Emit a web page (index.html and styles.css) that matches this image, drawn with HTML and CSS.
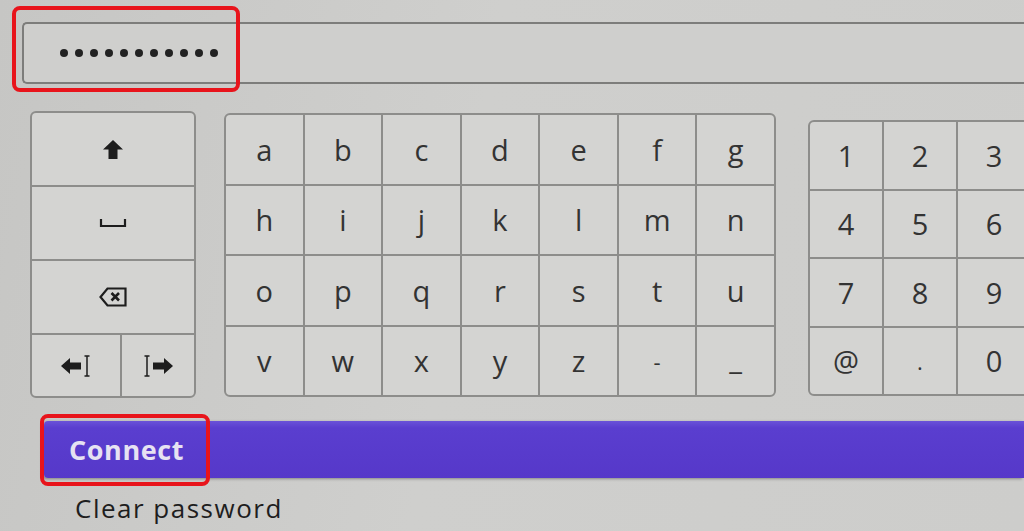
FILE: index.html
```html
<!DOCTYPE html>
<html lang="en">
<head>
<meta charset="UTF-8" />
<meta name="viewport" content="width=device-width, initial-scale=1" />
<title>Enter password</title>
<link rel="stylesheet" href="styles.css">
</head>
<body>
  <div class="screen">
    <div class="field">
      <span class="dot"></span><span class="dot"></span><span class="dot"></span><span class="dot"></span>
      <span class="dot"></span><span class="dot"></span><span class="dot"></span><span class="dot"></span>
      <span class="dot"></span><span class="dot"></span><span class="dot"></span>
    </div>

    <div class="keyboard">
      <div class="pad tools">
        <div class="key wide">
          <svg width="22" height="21" viewBox="0 0 22 21"><path d="M11 1 L21 10.5 L15.5 10.5 L15.5 20 L6.5 20 L6.5 10.5 L1 10.5 Z" fill="#1d1d1d"/></svg>
        </div>
        <div class="key wide">
          <svg width="28" height="10" viewBox="0 0 28 10"><path d="M2 1 V8 H26 V1" fill="none" stroke="#1d1d1d" stroke-width="2.2"/></svg>
        </div>
        <div class="key wide">
          <svg width="28" height="20" viewBox="0 0 28 20"><path d="M8.5 1.5 H26.5 V18.5 H8.5 L1.5 10 Z" fill="none" stroke="#1d1d1d" stroke-width="2.2"/><path d="M12.5 6 L20 13.5 M20 6 L12.5 13.5" stroke="#1d1d1d" stroke-width="2.6"/></svg>
        </div>
        <div class="key">
          <svg width="32" height="24" viewBox="0 0 32 24"><path d="M1 12 L10 4 L10 8.5 L21 8.5 L21 15.5 L10 15.5 L10 20 Z" fill="#1d1d1d"/><path d="M27 2 V22 M24.5 2 H29.5 M24.5 22 H29.5" stroke="#1d1d1d" stroke-width="1.5" fill="none"/></svg>
        </div>
        <div class="key">
          <svg width="32" height="24" viewBox="0 0 32 24"><path d="M31 12 L22 4 L22 8.5 L11 8.5 L11 15.5 L22 15.5 L22 20 Z" fill="#1d1d1d"/><path d="M5 2 V22 M2.5 2 H7.5 M2.5 22 H7.5" stroke="#1d1d1d" stroke-width="1.5" fill="none"/></svg>
        </div>
      </div>

      <div class="pad letters">
        <div class="key">a</div><div class="key">b</div><div class="key">c</div><div class="key">d</div><div class="key">e</div><div class="key">f</div><div class="key">g</div>
        <div class="key">h</div><div class="key">i</div><div class="key">j</div><div class="key">k</div><div class="key">l</div><div class="key">m</div><div class="key">n</div>
        <div class="key">o</div><div class="key">p</div><div class="key">q</div><div class="key">r</div><div class="key">s</div><div class="key">t</div><div class="key">u</div>
        <div class="key">v</div><div class="key">w</div><div class="key">x</div><div class="key">y</div><div class="key">z</div><div class="key small">-</div><div class="key low">_</div>
      </div>

      <div class="pad numbers">
        <div class="key">1</div><div class="key">2</div><div class="key">3</div>
        <div class="key">4</div><div class="key">5</div><div class="key">6</div>
        <div class="key">7</div><div class="key">8</div><div class="key">9</div>
        <div class="key">@</div><div class="key small">.</div><div class="key">0</div>
      </div>
    </div>

    <div class="connect">Connect</div>
    <div class="clear">Clear password</div>

    <div class="highlight hl-field"></div>
    <div class="highlight hl-connect"></div>
  </div>
</body>
</html>
```

FILE: styles.css
```css
body {
  margin: 0;
  width: 1024px;
  height: 531px;
  overflow: hidden;
  background: #cbcbc9;
  font-family: "Open Sans", Lato, sans-serif;
  color: #2e2e2e;
}

.screen {
  position: relative;
  width: 1024px;
  height: 531px;
  overflow: hidden;
  background: linear-gradient(100deg, #c6c6c4 0%, #cfcfcd 45%, #cdcdcb 100%);
}

/* Password field, runs off the right edge */
.field {
  margin: 22px 0 0 22px;
  height: 58px;
  border: 2px solid #7d7d7b;
  border-right: none;
  border-radius: 5px 0 0 5px;
  display: flex;
  align-items: center;
  gap: 7px;
  padding-left: 36px;
  background: #cfcfcd;
}

.dot {
  width: 8px;
  height: 8px;
  border-radius: 50%;
  background: #222;
}

.keyboard {
  display: flex;
  align-items: flex-start;
  margin-top: 27px;
}

.pad {
  display: grid;
  flex-shrink: 0;
  gap: 2px;
  background: #8d8d8b;
  border: 2px solid #8d8d8b;
  border-radius: 6px;
  overflow: hidden;
}

.key {
  background: #d4d4d2;
  display: flex;
  align-items: center;
  justify-content: center;
  font-size: 29px;
  line-height: 1;
  color: #333;
}

.tools {
  margin-left: 30px;
  width: 162px;
  height: 283px;
  grid-template-columns: 88px 1fr;
  grid-template-rows: 72px 72px 72px 1fr;
}

.tools .wide {
  grid-column: span 2;
}

.letters {
  margin-left: 28px;
  margin-top: 2px;
  width: 548px;
  height: 280px;
  grid-template-columns: repeat(7, 1fr);
  grid-template-rows: repeat(4, 1fr);
}

.numbers {
  margin-left: 32px;
  margin-top: 9px;
  width: 226px;
  height: 272px;
  grid-template-columns: repeat(3, 72px);
  grid-template-rows: repeat(4, 1fr);
}

.key.small {
  font-size: 22px;
}

.key.low {
  align-items: flex-end;
  padding-bottom: 22px;
}

.connect {
  margin: 23px 0 0 44px;
  height: 57px;
  background: linear-gradient(180deg, #6a52d8 0%, #5a3ecf 12%, #5638c9 100%);
  border-radius: 4px 0 0 4px;
  box-shadow: -2px 1px 3px rgba(0, 0, 0, 0.35);
  color: #e6e2f2;
  font-size: 27px;
  font-weight: 700;
  letter-spacing: 0.6px;
  display: flex;
  align-items: center;
  padding-left: 25px;
}

.clear {
  margin: 12px 0 0 75px;
  font-size: 26px;
  color: #1e1e1e;
  letter-spacing: 1.5px;
}

/* Red callout boxes drawn over the screenshot */
.highlight {
  position: absolute;
  border: 4px solid #e8141b;
  border-radius: 8px;
}

.hl-field {
  left: 12px;
  top: 6px;
  width: 220px;
  height: 78px;
}

.hl-connect {
  left: 40px;
  top: 414px;
  width: 162px;
  height: 64px;
}
```
